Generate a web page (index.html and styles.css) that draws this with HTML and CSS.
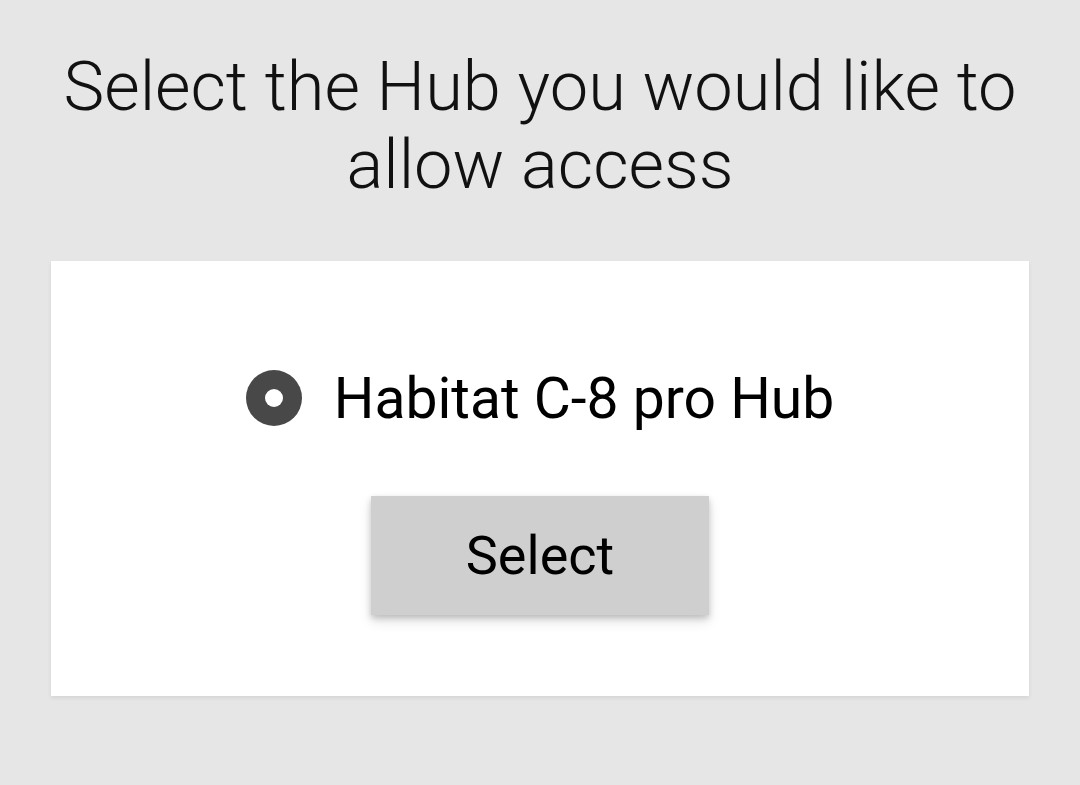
FILE: index.html
```html
<!DOCTYPE html>
<html>
<head>
<meta charset="utf-8">
<link rel="stylesheet" href="styles.css">
</head>
<body>
<div class="page">
  <h1 class="title">Select the Hub you would like to<br>allow access</h1>
  <div class="card">
    <div class="option">
      <span class="radio"><span class="radio-dot"></span></span>
      <span class="option-label">Habitat C-8 pro Hub</span>
    </div>
    <button class="select-btn">Select</button>
  </div>
</div>
</body>
</html>
```

FILE: styles.css
```css
html, body {
  margin: 0;
  padding: 0;
  background: #e6e6e6;
  width: 1080px;
  height: 785px;
  overflow: hidden;
}
.page {
  display: flex;
  flex-direction: column;
  align-items: center;
  padding-top: 48px;
  font-family: Roboto, "Liberation Sans", sans-serif;
}
.title {
  margin: 0;
  font-weight: 300;
  font-size: 68.6px;
  line-height: 78px;
  color: #111;
  text-align: center;
}
.card {
  margin-top: 57px;
  width: 978px;
  height: 435px;
  box-sizing: border-box;
  background: #fff;
  box-shadow: 0 2px 4px rgba(0,0,0,0.08);
  display: flex;
  flex-direction: column;
  align-items: center;
  padding-top: 109px;
}
.option {
  display: flex;
  align-items: center;
  gap: 32px;
  height: 56px;
}
.radio {
  width: 56px;
  height: 56px;
  border-radius: 50%;
  background: #484848;
  display: flex;
  align-items: center;
  justify-content: center;
}
.radio-dot {
  width: 18px;
  height: 18px;
  border-radius: 50%;
  background: #fff;
}
.option-label {
  font-size: 57px;
  font-weight: 400;
  color: #000;
}
.select-btn {
  margin-top: 70px;
  width: 338px;
  height: 119px;
  border: none;
  background: #cfcfcf;
  font-family: Roboto, "Liberation Sans", sans-serif;
  font-size: 54px;
  color: #000;
  box-shadow: 0 3px 6px rgba(0,0,0,0.18), 0 6px 12px rgba(0,0,0,0.12);
  padding: 0;
}
```
